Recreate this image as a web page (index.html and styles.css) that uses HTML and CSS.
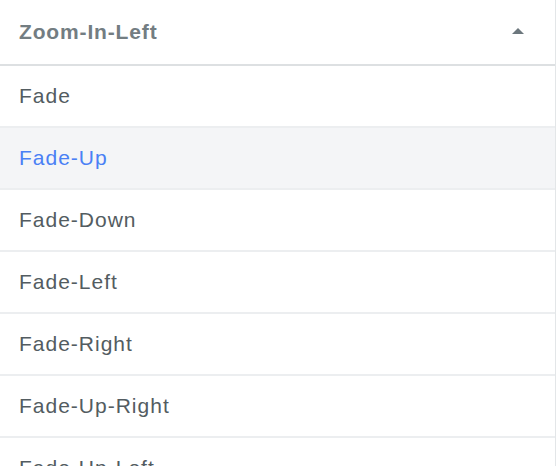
FILE: index.html
```html
<!DOCTYPE html>
<html>
<head>
<meta charset="utf-8">
<link rel="stylesheet" href="styles.css">
</head>
<body>
<div class="select">
  <div class="select-header">
    <span class="select-value">Zoom-In-Left</span>
    <span class="caret"></span>
  </div>
  <ul class="options">
    <li class="option">Fade</li>
    <li class="option option-active">Fade-Up</li>
    <li class="option">Fade-Down</li>
    <li class="option">Fade-Left</li>
    <li class="option">Fade-Right</li>
    <li class="option">Fade-Up-Right</li>
    <li class="option">Fade-Up-Left</li>
  </ul>
</div>
</body>
</html>
```
FILE: styles.css
```css
html, body {
  margin: 0;
  padding: 0;
  background: #ffffff;
  overflow: hidden;
}
.select {
  width: 555px;
  height: 466px;
  border-right: 1px solid #e3e6e8;
  font-family: "Liberation Sans", Arial, sans-serif;
  overflow: hidden;
}
.select-header {
  height: 64px;
  border-bottom: 2px solid #dde0e2;
  display: flex;
  align-items: center;
  justify-content: space-between;
  padding: 0 31px 0 19px;
}
.select-value {
  font-size: 21px;
  font-weight: bold;
  color: #737d82;
  letter-spacing: 0.85px;
}
.caret {
  width: 0;
  height: 0;
  border-left: 6px solid transparent;
  border-right: 6px solid transparent;
  border-bottom: 6px solid #6c777d;
  margin-top: -3px;
}
.options {
  list-style: none;
  margin: 0;
  padding: 0;
}
.option {
  height: 60px;
  border-bottom: 2px solid #eceef0;
  display: flex;
  align-items: center;
  padding-left: 19px;
  font-size: 21px;
  color: #535c61;
  letter-spacing: 1px;
}
.option-active {
  background: #f4f5f7;
  color: #4a80f5;
}
```
